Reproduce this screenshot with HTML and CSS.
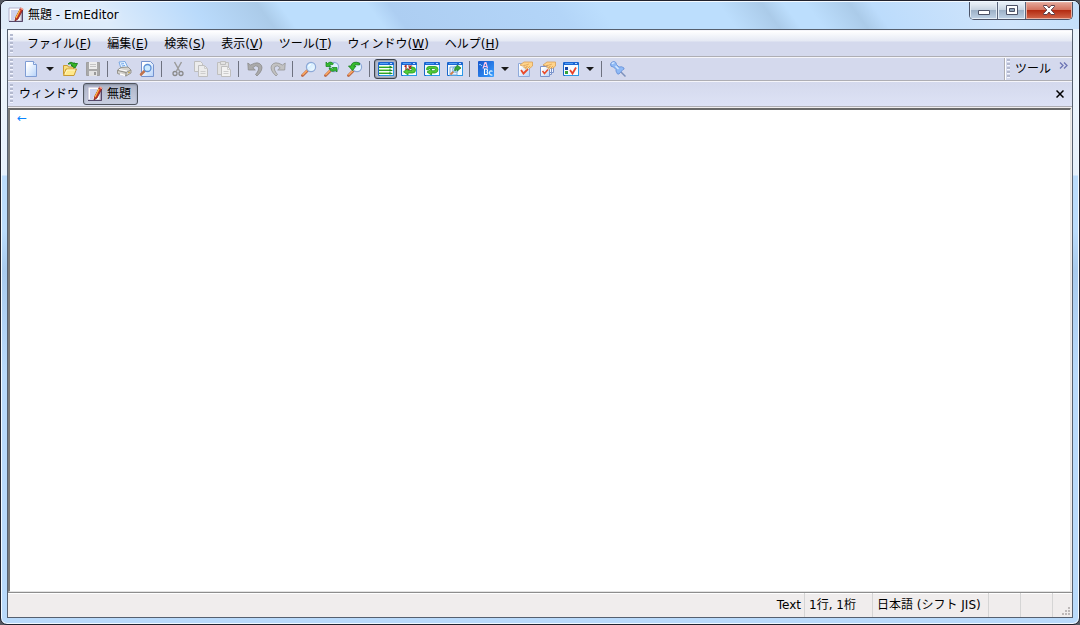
FILE: index.html
```
<!DOCTYPE html>
<html lang="ja">
<head>
<meta charset="utf-8">
<title>無題 - EmEditor</title>
<link rel="stylesheet" href="styles.css">
</head>
<body>
<svg class="defs" aria-hidden="true">
  <defs>
    <linearGradient id="paper" x1="0" y1="0" x2="1" y2="1"><stop offset="0.2" stop-color="#fff"/><stop offset="1" stop-color="#b4d2fa"/></linearGradient>
    <linearGradient id="lens" x1="0" y1="0" x2="1" y2="1"><stop offset="0" stop-color="#c4e6ff"/><stop offset="1" stop-color="#f4fcff"/></linearGradient>
    <linearGradient id="blue" x1="0" y1="0" x2="1" y2="1"><stop offset="0" stop-color="#1554cc"/><stop offset="1" stop-color="#3aa0ff"/></linearGradient>
    <symbol id="app" viewBox="0 0 16 16">
      <path d="M2 2h13v13H2z" fill="#a493a0"/><path d="M1 1h12v13H1z" fill="#fff" stroke="#b3b2cc"/><path d="M1 14.500h13.500V3" fill="none" stroke="#54486a"/>
      <path d="M3 4h7M3 6h6M3 8h5M3 10h4M3 12h3" stroke="#9aa4dc"/>
      <path d="M12.500 1l2.500 1.500-5 9.500-3 2 .5-3.500z" fill="#c92f22" stroke="#6e1d1b" stroke-width=".7"/><path d="M12 3l-4 8" stroke="#ffbd45" stroke-width="1.200"/><path d="M12.500 1l2.500 1.500" stroke="#f7a18c" stroke-width="1.500"/>
    </symbol>
    <symbol id="glass" viewBox="0 0 16 16">
      <path d="M1.500 14.500l5-5" stroke="#bc6846" stroke-width="2.800" stroke-linecap="round"/><path d="M1.500 14l4.500-4.500" stroke="#ffad63" stroke-width="1.300"/>
      <circle cx="10" cy="6" r="4.600" fill="url(#lens)" stroke="#8ea9d7" stroke-width="1.200"/><path d="M7.500 5.500Q8 3.500 10 3.500" fill="none" stroke="#fff" stroke-width="1.200"/>
    </symbol>
    <symbol id="frame" viewBox="0 0 16 16">
      <path d="M.5 1.500h15v13H.5z" fill="#f5fbff" stroke="#1b67c9"/><path d="M1 1h14v3H1z" fill="#1c65d2"/><path d="M2 2.500h8" stroke="#53a1f5"/><path d="M12 2.500h2" stroke="#b9dcff"/><path d="M15.500 4v10.500H2" fill="none" stroke="#2b99e8"/>
    </symbol>
    <symbol id="hand" viewBox="0 0 16 16">
      <path d="M3 4l4-3h8.500v4l-3 2.500-1-1-2 2-1-.5 1-2-2 1-1-1 2-2-3 1z" fill="#ffd48b" stroke="#d9a055" stroke-width=".8"/><path d="M9 4l3-1M9 6l2-1M11 7l2-2" stroke="#e0a556" stroke-width=".8"/>
    </symbol>
  </defs>
</svg>
<div class="window">
  <header class="titlebar">
    <svg class="icon"><use href="#app"/></svg>
    <h1 class="title">無題 - EmEditor</h1>
    <div class="caption">
      <button class="cap" aria-label="最小化"><svg width="14" height="12" viewBox="0 0 14 12"><path d="M1.500 6.500h11v4h-11z" fill="#fff" stroke="#4d5266"/></svg></button>
      <button class="cap" aria-label="最大化"><svg width="14" height="12" viewBox="0 0 14 12"><path d="M1.500 1.500h11v9h-11z" fill="#fff" stroke="#4d5266"/><path d="M4.500 4.500h5v3h-5z" fill="#8fa3b9" stroke="#4d5266"/></svg></button>
      <button class="cap close" aria-label="閉じる"><svg width="14" height="12" viewBox="0 0 14 12"><path d="M1.500 1.500h3.500l2 2.500 2-2.500h3.500v1L9.200 6l3.300 3.500v1H9L7 8l-2 2.500H1.500v-1L4.800 6 1.500 2.500z" fill="#fff" stroke="#5c3f49"/></svg></button>
    </div>
  </header>
  <div class="client">
    <nav class="bar menubar">
      <span class="grip"></span>
      <button class="menu">ファイル(<u>F</u>)</button>
      <button class="menu">編集(<u>E</u>)</button>
      <button class="menu">検索(<u>S</u>)</button>
      <button class="menu">表示(<u>V</u>)</button>
      <button class="menu">ツール(<u>T</u>)</button>
      <button class="menu">ウィンドウ(<u>W</u>)</button>
      <button class="menu">ヘルプ(<u>H</u>)</button>
    </nav>
    <div class="bar toolbar" role="toolbar">
      <span class="grip"></span>
      <button class="tool" aria-label="新規作成"><svg class="icon" viewBox="0 0 16 16"><path d="M2.500 .5h8l3 3v12h-11z" fill="url(#paper)" stroke="#7f9dd4"/><path d="M10.500 .5v3h3" fill="#e0edff" stroke="#7f9dd4"/></svg></button>
      <button class="drop" aria-label="新規作成メニュー"></button>
      <button class="tool" aria-label="開く"><svg class="icon" viewBox="0 0 16 16"><path d="M1.500 13.500v-9h4l1 1.500h5v3" fill="#f9de7e" stroke="#c99a32"/><path d="M1.500 14.500L4 8h10.500L12 14.500z" fill="#ffe98c" stroke="#c99a32"/><path d="M3 13l2-4h8" fill="none" stroke="#fff8c8"/><path d="M6 3Q9-.5 12 3V1.500l.5 1H15.500l-2.500 4.500L9 4.500h1.500Q9 2 6 3z" fill="#36b524" stroke="#197f1d" stroke-width=".9"/></svg></button>
      <button class="tool" aria-label="保存"><svg class="icon" viewBox="0 0 16 16"><path d="M1.500 1.500h13v13h-13z" fill="#a9a9a9" stroke="#a0a0a0"/><path d="M4 1h8v7H4z" fill="#eee"/><path d="M5 3.500h6M5 5.500h6" stroke="#c5c5c5"/><path d="M4 10h8v5H4z" fill="#e2e2e2"/><path d="M9 11h2v3H9z" fill="#999"/></svg></button>
      <span class="sep"></span>
      <button class="tool" aria-label="印刷"><svg class="icon" viewBox="0 0 16 16"><path d="M3 1l6-.5 3 6-7 1z" fill="#e5f3ff" stroke="#7ba9e2"/><path d="M5 3l3-.4M5.800 5l3.200-.5" stroke="#6fa6ec"/><path d="M1.500 9L5 6.500l7-.5 3 3v3l-5 3-8.500-2.500z" fill="#d5d3cd" stroke="#96958f"/><path d="M2 9.500l8 2 5-2.500M10 11.500V15" fill="none" stroke="#8f8d86"/><path d="M3 8.500l8 1.500" stroke="#fff"/><path d="M4 13l5 1.500" stroke="#fff" stroke-width="1.500"/><path d="M12 12l2-1" stroke="#caa73b"/></svg></button>
      <button class="tool" aria-label="印刷プレビュー"><svg class="icon" viewBox="0 0 16 16"><path d="M2.500 .5h9l3 3v12h-12z" fill="url(#paper)" stroke="#7593cf"/><path d="M2 13.500l4-4" stroke="#c1734c" stroke-width="2.500" stroke-linecap="round"/><circle cx="8.500" cy="7" r="3.500" fill="#cceaff" stroke="#5b8fd5" stroke-width="1.300"/></svg></button>
      <span class="sep"></span>
      <button class="tool" aria-label="切り取り"><svg class="icon" viewBox="0 0 16 16" fill="none"><path d="M4.500 1l5 9M11.500 1l-5 9" stroke="#9c9c9c" stroke-width="1.500"/><circle cx="5" cy="12.500" r="2" stroke="#8a8a8a" stroke-width="1.300"/><circle cx="11" cy="12.500" r="2" stroke="#8a8a8a" stroke-width="1.300"/></svg></button>
      <button class="tool" aria-label="コピー"><svg class="icon" viewBox="0 0 16 16" fill="#ececec" stroke="#bfbfbf"><path d="M1.500 .5h6l2 2v8h-8z"/><path d="M5.500 4.500h6l3 3v8h-9z"/><path d="M11.500 4.500v3h3M7.500 10.500h5M7.500 12.500h5" fill="none" stroke="#cdcdcd"/></svg></button>
      <button class="tool" aria-label="貼り付け"><svg class="icon" viewBox="0 0 16 16" fill="#e2e2e2" stroke="#bfbfbf"><path d="M1.500 1.500h11v12h-11z"/><path d="M4.500 .5h5v3h-5z"/><path d="M5.500 5.500h6l3 3v7h-9z" fill="#f2f2f2"/><path d="M11.500 5.500v3h3M7.500 10.500h5M7.500 12.500h5" fill="none" stroke="#cdcdcd"/></svg></button>
      <span class="sep"></span>
      <button class="tool" aria-label="元に戻す"><svg class="icon" viewBox="0 0 16 16"><path d="M.8 2l.5 7h7L5.800 6.700Q9 3.500 11 5.500q2 3-2.500 8l1.500 1.500q6.500-6 4.500-10.500Q11.500-.5 3.500 4z" fill="#aaa" stroke="#8c8c8c" stroke-width=".8"/></svg></button>
      <button class="tool" aria-label="やり直し"><svg class="icon" viewBox="0 0 16 16"><path d="M15.200 2l-.5 7h-7l2.500-2.300Q7 3.500 5 5.500q-2 3 2.500 8L6 15Q-.5 9 1.500 4.500 4.500-.5 12.500 4z" fill="#c2c2c2" stroke="#969696" stroke-width=".8"/></svg></button>
      <span class="sep"></span>
      <button class="tool" aria-label="検索"><svg class="icon"><use href="#glass"/></svg></button>
      <button class="tool" aria-label="次を検索"><svg class="icon" viewBox="0 0 16 16"><use href="#glass" width="16" height="16"/><path d="M2 1l1.500 1.500Q7-.5 9.500 3L8 4Q7 2.500 5.500 4L7 5.500H2z" fill="#36bd2f" stroke="#167e1d" stroke-width=".7"/><path d="M5 7h2q1 2 2.500 1L8 6.500h5V11l-1.700-1.500Q7 12 5 7z" fill="#36bd2f" stroke="#167e1d" stroke-width=".7"/></svg></button>
      <button class="tool" aria-label="前を検索"><svg class="icon" viewBox="0 0 16 16"><use href="#glass" width="16" height="16"/><path d="M12.500 2Q5-.5 4 5H1.500L5.500 9.500 9 5H6.800q1-2 5.700-1z" fill="#36bd2f" stroke="#167e1d" stroke-width=".8"/></svg></button>
      <span class="sep"></span>
      <button class="tool pressed" aria-label="折り返さない" aria-pressed="true"><svg class="icon" viewBox="0 0 16 16"><use href="#frame" width="16" height="16"/><path d="M1 6.500h13M1 9.500h13M1 12.500h13" stroke="#2f9f2b"/><path d="M1 5.500h11M1 8.500h11M1 11.500h11" stroke="#a4e58c"/><path d="M11.500 4.500L15 6.500l-3.500 1zM11.500 8l3.500 1.500-3.500 1zM11.500 11l3.500 1.500-3.500 1z" fill="#198c1f"/></svg></button>
      <button class="tool" aria-label="文字数で折り返す"><svg class="icon" viewBox="0 0 16 16"><use href="#frame" width="16" height="16"/><path d="M10 6h1.500q3 0 3 3t-3 3H7v2L2.500 10.800 7 7.500V9.500h4Q13 8.500 10 8z" fill="#55cb35" stroke="#229a22" stroke-width=".8"/><path d="M3.500 5.500l1.500-1V9M7 5h3L8.500 6.500q2.500 1-1.500 2" fill="none" stroke="#a82016" stroke-width="1.200"/></svg></button>
      <button class="tool" aria-label="ウィンドウの右端で折り返す"><svg class="icon" viewBox="0 0 16 16"><use href="#frame" width="16" height="16"/><path d="M2.500 8.500Q2.500 5.500 5 5.500h6q3 0 3 3T11 12H7.500v2L3 11l4.500-3.200v2H10.500Q12 8.500 10.500 7.500H6Q4.500 7.500 4 9z" fill="#55cb35" stroke="#229a22" stroke-width=".8"/></svg></button>
      <button class="tool" aria-label="ページで折り返す"><svg class="icon" viewBox="0 0 16 16"><use href="#frame" width="16" height="16"/><path d="M3 6h7v8H3z" fill="#e8f5ff" stroke="#80acd9"/><path d="M3.500 13.500l3-3" stroke="#cc7e4c" stroke-width="1.800"/><circle cx="8.500" cy="8.500" r="2.800" fill="#d9f3ff" stroke="#6ba2d6"/><path d="M7.500 9.500q0-4 2.500-4V4l4 3-4 3V8Q9 8 8.500 10z" fill="#3aa93a" stroke="#167a29" stroke-width=".7"/></svg></button>
      <span class="sep"></span>
      <button class="tool" aria-label="フォント"><svg class="icon" viewBox="0 0 16 16"><rect width="16" height="16" rx="1" fill="url(#blue)"/><path d="M5 7.500L7 1.500h1l1.500 6M6 5.500h3" fill="none" stroke="#ffc7e4" stroke-width="1.200"/><path d="M1 4q1-1.500 2 0l1 1" fill="none" stroke="#8bcbff"/><path d="M6.500 8v5.500h2q2.500-1 .5-2.700 1.500-2-1-2.800z" fill="none" stroke="#fff" stroke-width="1.100"/><path d="M14.500 10.500q-2-1.500-3 .8-.3 3 3 2.700" fill="none" stroke="#d6efff" stroke-width="1.200"/></svg></button>
      <button class="drop" aria-label="フォントメニュー"></button>
      <button class="tool" aria-label="現在の設定のプロパティ"><svg class="icon" viewBox="0 0 16 16"><path d="M1.500 2.500h11v13h-11z" fill="url(#paper)" stroke="#8faadb"/><path d="M4 9l2.500 3.500L11 8" fill="none" stroke="#ea4a2c" stroke-width="1.800"/><use href="#hand" width="16" height="16"/></svg></button>
      <button class="tool" aria-label="すべての設定のプロパティ"><svg class="icon" viewBox="0 0 16 16"><path d="M5.500 3.500h8v8h-8zM3.500 4.500h8v9h-8z" fill="#edf4ff" stroke="#7b93cb"/><path d="M.5 5.500h9v10h-9z" fill="url(#paper)" stroke="#7b93cb"/><path d="M2.500 10l2 2.500 3.500-4" fill="none" stroke="#ea4a2c" stroke-width="1.600"/><use href="#hand" width="16" height="16"/></svg></button>
      <button class="tool" aria-label="設定の選択"><svg class="icon" viewBox="0 0 16 16"><use href="#frame" width="16" height="16"/><path d="M2 6h3v3H2z" fill="#1747a5"/><path d="M2 10h3v3H2z" fill="#35a43b"/><path d="M7 9l2.500 3.500L13 6.500" fill="none" stroke="#e8442b" stroke-width="1.800"/></svg></button>
      <button class="drop" aria-label="設定メニュー"></button>
      <span class="sep"></span>
      <button class="tool" aria-label="常に手前に表示"><svg class="icon" viewBox="0 0 16 16"><path d="M10.500 10.500l5 5" stroke="#7d91bb" stroke-width="1.500"/><path d="M.5 3Q1.500 .5 4 .5 6.500 1 6.500 3.500L9 6q3-1 5 1 .5 1.500-1 1.500l-4 4.500q-2 .5-2-1Q5.500 10 6 8.500L3.500 6Q0 6 .5 3z" fill="#8fbaf6" stroke="#6b93d8" stroke-width=".9"/><path d="M2 3q1-1.500 2.500-1M5.500 5l3 3" fill="none" stroke="#d6e9ff" stroke-width="1.300"/></svg></button>
      <div class="extra">
        <span class="grip"></span>
        <span class="extra-label">ツール</span>
        <button class="more" aria-label="その他のボタン"><svg width="9" height="7" viewBox="0 0 9 7"><path d="M1 .5l3 3-3 3M5 .5l3 3-3 3" fill="none" stroke="#6d74b4" stroke-width="1.300"/></svg></button>
      </div>
    </div>
    <div class="bar tabbar">
      <span class="grip"></span>
      <span class="tab-label">ウィンドウ</span>
      <button class="tab"><svg class="icon"><use href="#app"/></svg>無題</button>
      <button class="tab-close" aria-label="タブを閉じる"><svg width="8" height="8" viewBox="0 0 8 8"><path d="M.5 .5l7 7M7.500 .5l-7 7" stroke="#000" stroke-width="1.500"/></svg></button>
    </div>
    <textarea class="editor" aria-label="本文" spellcheck="false">←</textarea>
    <footer class="status">
      <span class="cell mode">Text</span>
      <span class="cell position">1行, 1桁</span>
      <span class="cell encoding">日本語 (シフト JIS)</span>
      <span class="cell blank"></span>
      <span class="cell blank"></span>
      <span class="cell corner"><svg width="8" height="8" viewBox="0 0 8 8"><path d="M6 0h2v2H6zM3 3h2v2H3zM6 3h2v2H6zM0 6h2v2H0zM3 6h2v2H3zM6 6h2v2H6z" fill="#bdb9b9"/></svg></span>
    </footer>
  </div>
</div>
</body>
</html>
```
FILE: styles.css
```
* { box-sizing: border-box; }
body {
  margin: 0;
  background: #555860;
  color: #000;
  font: 12px/16px "DejaVu Sans", "Noto Sans CJK JP", sans-serif;
}
button {
  margin: 0;
  padding: 0;
  border: 0;
  background: none;
  color: inherit;
  font: inherit;
}
.defs { position: absolute; width: 0; height: 0; }
.icon { display: block; flex: none; width: 16px; height: 16px; }

.window {
  display: flex;
  flex-direction: column;
  height: 100vh;
  border: 1px solid #20222e;
  border-radius: 7px;
  overflow: hidden;
  background: linear-gradient(#e3effb, #edf4fc 80px, #e6f0fb 174px, #bbdcfc 175px, #bbdcfc 230px, #a9cbee 270px, #b9dafb 60%, #b9dafb);
  box-shadow: inset 0 0 0 1px #f2f9ff;
}
.titlebar {
  display: flex;
  align-items: center;
  gap: 4px;
  height: 28px;
  padding-left: 7px;
  padding-bottom: 1px;
  border-top: 1px solid #f4faff;
  background: linear-gradient(54deg, #dfebf8, #deecfb 10%, #b9dafb 19%, #abcbe9 25%, #bcdefd 27%, #bcdefd 35%, #adcef2 37%, #b3d5f8 52%, #bcdefd 56%, #bcdefd 67%, #abcbe9 71%, #bcdefd 73%, #bcdefd 75%, #abcbe9 79%, #bcdcfc 81%, #cfe4fb 92%, #c3dffa);
}
.title { margin: 0; font-size: 12px; font-weight: normal; text-shadow: 0 0 6px #fff; }
.caption {
  display: flex;
  align-self: flex-start;
  margin-left: auto;
  margin-right: 6px;
  border: 1px solid #4b5367;
  border-top: 0;
  border-radius: 0 0 5px 5px;
  overflow: hidden;
}
.cap {
  display: flex;
  align-items: center;
  justify-content: center;
  width: 28px;
  height: 17px;
  padding-bottom: 2px;
  border-right: 1px solid #59647a;
  background: linear-gradient(#edf3f9, #c5d2e0 48%, #9db1c7 50%, #bfd2e6);
  box-shadow: inset 0 0 0 1px #e4edf6;
}
.close {
  width: 46px;
  border-right: 0;
  background: linear-gradient(#e5aa9d, #d26f5b 48%, #b42c13 50%, #d3684c);
  box-shadow: inset 0 0 0 1px #e9b0a2;
}

.client {
  display: flex;
  flex: 1;
  flex-direction: column;
  min-height: 0;
  margin: 0 6px 6px;
  border: 1px solid #56606f;
  background: #f0eded;
}
.bar {
  display: flex;
  align-items: center;
  padding-left: 2px;
  border-top: 1px solid #f5f5fa;
  border-bottom: 1px solid #aeaeb4;
  background: #d4d9ed;
}
.grip {
  flex: none;
  width: 3px;
  height: 20px;
  margin-right: 6px;
  background: repeating-linear-gradient(#b4bacf 0 2px, #f4f6ff 2px 3px, #d4d9ed 3px 4px);
}
.menubar { height: 27px; background: linear-gradient(#fff, #e5e9f4 10px, #d4d9ed 11px); }
.menu { padding: 0 8px; white-space: nowrap; }
.toolbar { height: 24px; }
.tool {
  display: flex;
  flex: none;
  align-items: center;
  justify-content: center;
  width: 23px;
  height: 20px;
}
.pressed {
  border: 1px solid #3d434d;
  border-radius: 3px;
  background: #b6bccd;
  box-shadow: inset 0 0 2px #59606e;
}
.drop { display: flex; flex: none; justify-content: center; width: 16px; }
.drop::before {
  content: "";
  border: 4px solid transparent;
  border-top-color: #191919;
  border-bottom: 0;
}
.sep { flex: none; width: 1px; height: 16px; margin: 0 4px 0 3px; background: #6e7280; }
.extra {
  display: flex;
  align-items: center;
  align-self: stretch;
  margin-left: auto;
  padding: 0 4px 0 2px;
  border-left: 1px solid #aeaeb4;
  box-shadow: inset 1px 0 #fff;
}
.extra .grip { margin-right: 5px; }
.extra-label { margin-right: 8px; }
.more { display: flex; padding-bottom: 8px; }
.tabbar { height: 26px; background: linear-gradient(#d4d9ed, #dde2f5); }
.tab-label { margin-right: 4px; }
.tab {
  display: flex;
  align-items: center;
  gap: 4px;
  height: 22px;
  padding: 0 6px 0 3px;
  border: 1px solid #50555f;
  border-radius: 3px;
  background: linear-gradient(#aeb5c8, #c9cfe1);
  box-shadow: inset 0 1px 2px #858da0;
}
.tab-close { display: flex; margin: 0 8px 0 auto; }
.editor {
  flex: 1;
  min-height: 0;
  margin: 1px 1px 0 0;
  padding: 1px 7px;
  border: solid;
  border-width: 2px 1px 1px 2px;
  border-color: #696969 #e3e3e3 #e3e3e3 #7b7b7b;
  border-radius: 0;
  outline: 0;
  resize: none;
  background: #fff;
  color: #0a84ff;
  font: 12px/14px "DejaVu Sans", sans-serif;
}
.status {
  display: flex;
  align-items: stretch;
  height: 25px;
  border-top: 1px solid #8d8d8d;
  box-shadow: inset 0 1px #fff;
}
.cell { padding: 4px 3px 2px 4px; border-left: 1px solid #d5d5d5; white-space: nowrap; }
.mode { margin-left: auto; border-left: 0; }
.position { min-width: 68px; }
.encoding { min-width: 116px; }
.blank { width: 32px; }
.corner { display: flex; align-items: flex-end; justify-content: flex-end; width: 20px; padding: 2px; }
```
